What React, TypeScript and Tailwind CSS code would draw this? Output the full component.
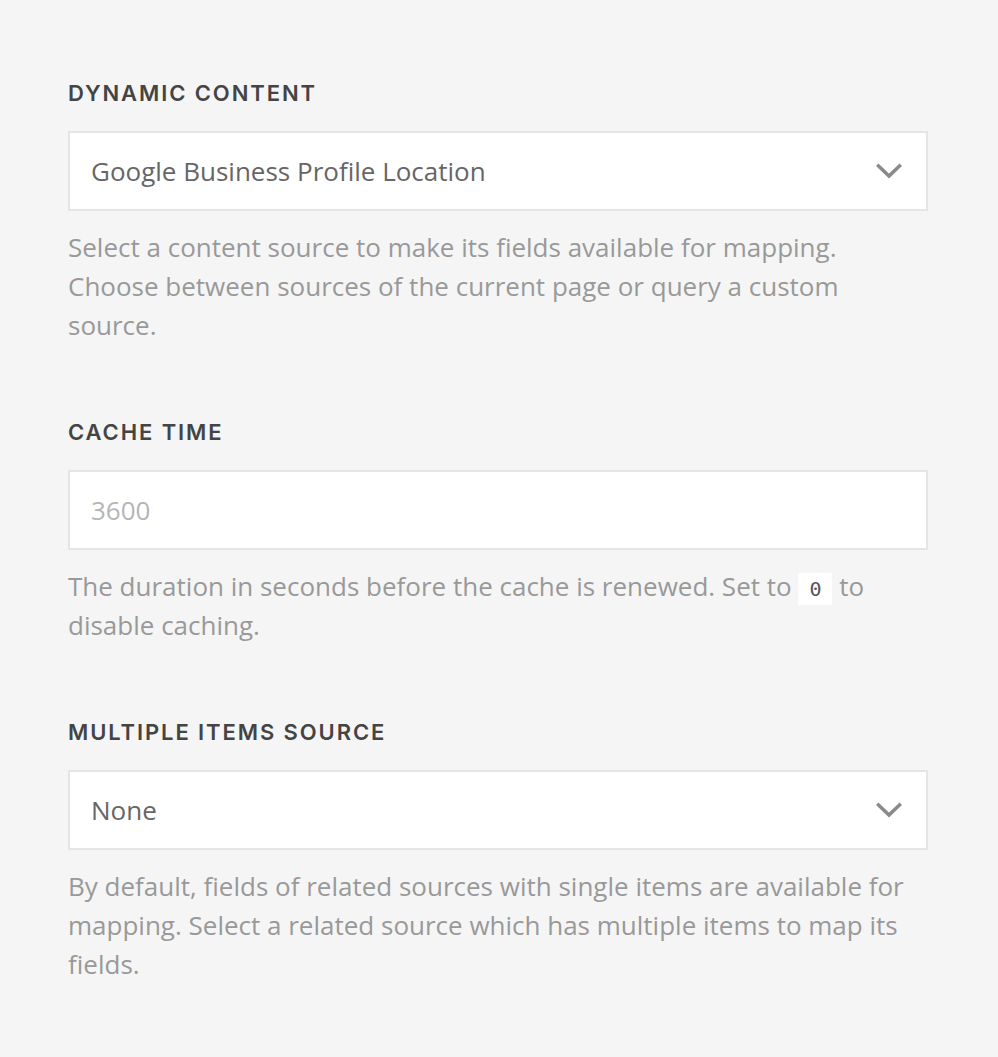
import type { ReactNode } from "react"

const body = "font-['Open_Sans',sans-serif]"

function Chevron() {
  return (
    <svg width="26" height="16" viewBox="0 0 26 16" fill="none" className="shrink-0">
      <path d="M2.5 3 L13 13 L23.5 3" stroke="#8a8a8a" strokeWidth="3.6" strokeLinecap="square" />
    </svg>
  )
}

function Field({ label, children, help }: { label: string; children: ReactNode; help: ReactNode }) {
  return (
    <section className="flex flex-col">
      <h3 className="text-[22px] leading-[32px] font-semibold uppercase tracking-[1.9px] text-[#444] font-['Inter',sans-serif]">
        {label}
      </h3>
      <div className="mt-[22px]">{children}</div>
      <p className={`mt-[17px] text-[26px] leading-[39px] text-[#999] ${body}`}>{help}</p>
    </section>
  )
}

function Select({ value }: { value: string }) {
  return (
    <div className="h-[80px] flex items-center justify-between pl-[21px] pr-[24px] bg-white border-2 border-[#e5e5e5]">
      <span className={`text-[26px] text-[#666] ${body}`}>{value}</span>
      <Chevron />
    </div>
  )
}

export default function App() {
  return (
    <div className="min-h-screen w-full bg-[#f5f5f5]">
      <div className="w-[860px] ml-[68px] pt-[77px] pb-[60px] flex flex-col gap-[71px]">
        {/* ── Dynamic content ───────────────────────────── */}
        <Field
          label="Dynamic Content"
          help="Select a content source to make its fields available for mapping. Choose between sources of the current page or query a custom source."
        >
          <Select value="Google Business Profile Location" />
        </Field>

        {/* ── Cache time ────────────────────────────────── */}
        <Field
          label="Cache Time"
          help={
            <>
              The duration in seconds before the cache is renewed. Set to{" "}
              <code className="bg-white px-[11px] py-[4px] text-[20px] leading-none text-[#555] font-['DejaVu_Sans_Mono',monospace]">0</code>{" "}
              to disable caching.
            </>
          }
        >
          <div className="h-[80px] flex items-center pl-[21px] bg-white border-2 border-[#e5e5e5]">
            <span className={`text-[26px] text-[#b5b5b5] ${body}`}>3600</span>
          </div>
        </Field>

        {/* ── Multiple items source ─────────────────────── */}
        <Field
          label="Multiple Items Source"
          help="By default, fields of related sources with single items are available for mapping. Select a related source which has multiple items to map its fields."
        >
          <Select value="None" />
        </Field>
      </div>
    </div>
  )
}
